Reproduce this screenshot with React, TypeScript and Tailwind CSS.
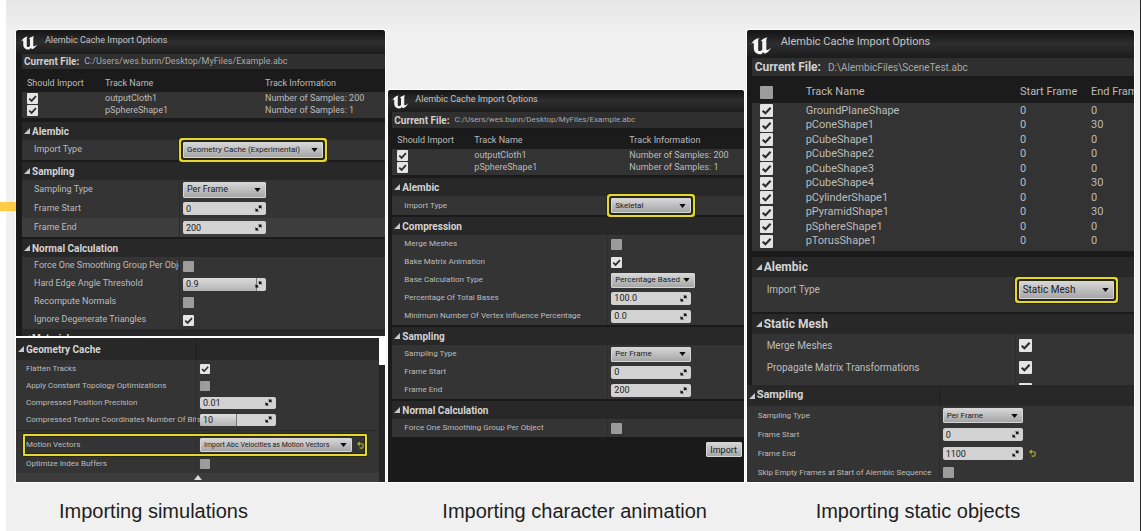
import React from "react";

type Box = { className?: string };

function UnrealLogo({ className = "" }: Box) {
  return (
    <svg viewBox="0 0 32 28" className={className} aria-hidden="true" fill="#f4f4f4">
      <path d="M0 11C3 5.500 7 2 13.500 1C11.800 2.500 11.500 4 11.500 6V19C11.500 21 12.300 22 13.800 22C15.500 22 17 21 18 20V7C18 6 17 5.500 15.500 6C17.500 3.500 21.500 1 26.500 0.500C24.800 2 24.500 3.500 24.500 5V18.500C24.500 20 25 20.500 26 20.500C28 20.500 30 19 32 16.500C30.500 21.500 27 24.500 22 26.500L19.500 24L16.500 27C10 28 4.800 24.500 4.500 18V10.500C4.500 8.500 2.500 8.500 0 11Z" />
    </svg>
  );
}

function Check({ label, checked = false, size = "size-[11px]" }: { label: string; checked?: boolean; size?: string }) {
  return (
    <span className={`grid shrink-0 ${size}`}>
      <input
        type="checkbox"
        aria-label={label}
        defaultChecked={checked}
        className="peer col-start-1 row-start-1 size-full appearance-none rounded-[1px] bg-[#9c9c9c] checked:bg-[#e4e4e4]"
      />
      <svg viewBox="0 0 12 12" className="pointer-events-none invisible col-start-1 row-start-1 size-full peer-checked:visible" fill="none" stroke="#2c2c2c" strokeWidth="1.900" aria-hidden="true">
        <path d="M2.500 6.200L5 8.600L9.800 3.400" />
      </svg>
    </span>
  );
}

function Select({ label, value, className, marked = false }: { label: string; value: string; className: string; marked?: boolean }) {
  return (
    <span className={`grid shrink-0 items-center ${marked ? "rounded-[1px] shadow-[0_0_0_2px_#29270f,0_0_0_4px_#e2d831,0_0_0_5px_#29270f] relative" : ""} ${className}`}>
      <select
        aria-label={label}
        defaultValue={value}
        className="col-start-1 row-start-1 size-full appearance-none rounded-[1px] border border-[#d6d6d6] bg-linear-to-b from-[#d6d6d6] to-[#a6a6a6] pl-[3px] text-[#1c1c1c]"
      >
        <option>{value}</option>
      </select>
      <svg viewBox="0 0 8 5" className="pointer-events-none col-start-1 row-start-1 mr-[5px] h-[4px] w-[7px] justify-self-end" fill="#0c0c0c" aria-hidden="true">
        <path d="M0 0H8L4 5Z" />
      </svg>
    </span>
  );
}

function NumberBox({ label, value, className, fill = "" }: { label: string; value: string; className: string; fill?: string }) {
  return (
    <span className={`grid shrink-0 items-center overflow-hidden rounded-[2px] bg-[#d2d2d2] text-[9px] ${className}`}>
      <span className={`col-start-1 row-start-1 h-full bg-linear-to-b from-[#dcdcdc] to-[#b4b4b4] ${fill || "hidden"}`} />
      <input
        type="text"
        aria-label={label}
        defaultValue={value}
        className="col-start-1 row-start-1 size-full min-w-0 bg-transparent pl-[3px] text-[#1c1c1c]"
      />
      <svg viewBox="0 0 8 8" className="pointer-events-none col-start-1 row-start-1 mr-[4px] size-[7px] justify-self-end" fill="#101010" aria-hidden="true">
        <path d="M3.500 0.500H7.500V4.500L6.200 3.200L5.300 4.100L3.900 2.700L4.800 1.800ZM4.500 7.500H0.500V3.500L1.800 4.800L2.400 4.200L3.800 5.600L3.200 6.200Z" />
      </svg>
    </span>
  );
}

function Reset() {
  return (
    <button type="button" aria-label="Reset to default" className="shrink-0">
      <svg viewBox="0 0 8 8" className="size-[7px]" fill="none" stroke="#b4b42c" strokeWidth="1.300" aria-hidden="true">
        <path d="M1.500 2H5.500Q7 2 7 4V5Q7 7 5.500 7H3" />
        <path d="M3.200 0L1 2L3.200 4" />
      </svg>
    </button>
  );
}

function Header({ title, className }: { title: string; className: string }) {
  return (
    <h3 className={`flex items-center gap-[2px] overflow-hidden bg-[#282828] font-bold whitespace-nowrap text-[#d4d4d4] ${className}`}>
      <svg viewBox="0 0 6 6" className="size-[6px] shrink-0" fill="#c8c8c8" aria-hidden="true">
        <path d="M6 0V6H0Z" />
      </svg>
      {title}
    </h3>
  );
}

function Row({ label, className, clip = false, children }: { label: string; className: string; clip?: boolean; children: React.ReactNode }) {
  return (
    <div className={`grid ${className}`}>
      <span className={`flex min-w-0 items-center whitespace-nowrap ${clip ? "overflow-hidden" : ""}`}>{label}</span>
      <div className="flex items-center border-l border-[#2b2b2b] pl-[3px]">{children}</div>
    </div>
  );
}

function TitleBar({ className, logo }: { className: string; logo: string }) {
  return (
    <div className={`flex items-start overflow-hidden bg-linear-to-b from-[#141414] via-[#2e2e2e] to-[#1c1c1c] whitespace-nowrap text-[#c4c4c4] ${className}`}>
      <UnrealLogo className={logo} />
      <h2>Alembic Cache Import Options</h2>
    </div>
  );
}

function FilePath({ path, className, pathClass }: { path: string; className: string; pathClass: string }) {
  return (
    <p className={`flex items-center overflow-hidden bg-[#2f2f2f] whitespace-nowrap ${className}`}>
      <b className="text-[#d0d0d0]">Current File:</b>
      <span className={`text-[#a8a8a8] ${pathClass}`}>{path}</span>
    </p>
  );
}

function TrackTable({ className, cols, head }: { className: string; cols: string[]; head: string }) {
  const rows = [
    ["outputCloth1", "Number of Samples: 200"],
    ["pSphereShape1", "Number of Samples: 1"],
  ];
  return (
    <table className={`w-full table-fixed text-left text-[9px] leading-[12px] whitespace-nowrap ${className}`}>
      <colgroup>
        {cols.map((c, i) => (
          <col key={i} className={c} />
        ))}
        <col />
      </colgroup>
      <thead className="bg-[#1b1b1b]">
        <tr className={head}>
          <th className="p-0 pl-[5px] font-normal">Should Import</th>
          <th className="p-0 font-normal">Track Name</th>
          <th className="p-0 font-normal">Track Information</th>
        </tr>
      </thead>
      <tbody className="bg-[#333333]">
        {rows.map(([name, info]) => (
          <tr key={name} className="h-[12px]">
            <td className="p-0 pl-[5px]"><Check label={name} checked /></td>
            <td className="p-0">{name}</td>
            <td className="p-0">{info}</td>
          </tr>
        ))}
      </tbody>
    </table>
  );
}

const panel = "overflow-hidden rounded-t-[3px] bg-[#1a1a1a] text-[#bcbcbc] ring-1 ring-white";
const caption = "pt-[17px] text-[20px] leading-6 whitespace-nowrap text-[#1e1e22] font-['Liberation_Sans',sans-serif]";

function Simulations() {
  const row = "h-[18px] grid-cols-[145px_1fr] pl-[12px] bg-[#343434]";
  const tall = "h-[19px] grid-cols-[145px_1fr] pl-[12px] bg-[#343434]";
  const low = "h-[17px] grid-cols-[170px_1fr] pl-[10px]";
  const head = "mt-[2px] h-[18px] pl-[2px] text-[10px]";
  return (
    <figure>
      <div className={`${panel} text-[9px]`}>
        <TitleBar className="h-[24px] pt-[4px] pl-[5px] text-[9px] leading-[13px]" logo="mt-[2px] mr-[8px] h-[14px] w-[16px]" />
        <div className="pl-[6px]">
          <FilePath path="C:/Users/wes.bunn/Desktop/MyFiles/Example.abc" className="h-[15px] pl-[2px] text-[10px]" pathClass="ml-[5px] text-[9px]" />
          <TrackTable className="mt-[4px] mb-[4px] border-b-2 border-[#333333]" cols={["w-[83px]", "w-[160px]"]} head="h-[19px]" />
          <Header title="Alembic" className="h-[18px] pl-[2px] text-[10px]" />
          <Row label="Import Type" className="h-[20px] grid-cols-[145px_1fr] bg-[#343434] pl-[12px]">
            <Select label="Import Type" value="Geometry Cache (Experimental)" className="h-[16px] w-[140px] text-[8px]" marked />
          </Row>
          <Header title="Sampling" className={head} />
          <Row label="Sampling Type" className={tall}>
            <Select label="Sampling Type" value="Per Frame" className="h-[15px] w-[83px]" />
          </Row>
          <Row label="Frame Start" className={tall}>
            <NumberBox label="Frame Start" value="0" className="h-[13px] w-[83px]" />
          </Row>
          <Row label="Frame End" className="h-[19px] grid-cols-[145px_1fr] bg-[#3d3d3d] pl-[12px]">
            <NumberBox label="Frame End" value="200" className="h-[13px] w-[83px]" />
          </Row>
          <Header title="Normal Calculation" className={head} />
          <Row label="Force One Smoothing Group Per Object" className={row} clip><Check label="Force One Smoothing Group Per Object" /></Row>
          <Row label="Hard Edge Angle Threshold" className={row}>
            <NumberBox label="Hard Edge Angle Threshold" value="0.9" className="h-[13px] w-[83px]" fill="w-[74px] border-r border-[#777777]" />
          </Row>
          <Row label="Recompute Normals" className={row}><Check label="Recompute Normals" /></Row>
          <Row label="Ignore Degenerate Triangles" className={row}><Check label="Ignore Degenerate Triangles" checked /></Row>
          <div className="h-[7px] overflow-hidden">
            <Header title="Material" className="h-[18px] pl-[2px] text-[10px]" />
          </div>
        </div>
        <div className="flex border-t-2 border-white text-[8px]">
          <div className="min-w-0 flex-1 bg-[#343434]">
            <div className="grid grid-cols-[180px_1fr] bg-[#282828]">
              <Header title="Geometry Cache" className="h-[22px] pl-[2px] text-[10px]" />
              <div className="border-l border-[#1f1f1f]" />
            </div>
            <Row label="Flatten Tracks" className={low}><Check label="Flatten Tracks" checked size="size-[10px]" /></Row>
            <Row label="Apply Constant Topology Optimizations" className={low}><Check label="Apply Constant Topology Optimizations" size="size-[10px]" /></Row>
            <Row label="Compressed Position Precision" className={low}>
              <NumberBox label="Compressed Position Precision" value="0.01" className="h-[12px] w-[76px]" />
            </Row>
            <Row label="Compressed Texture Coordinates Number Of Bits" className={low}>
              <NumberBox label="Compressed Texture Coordinates Number Of Bits" value="10" className="h-[12px] w-[76px]" fill="w-[37px] border-r border-[#777777]" />
            </Row>
            <div className="mt-[2px] border-t border-[#292929]" />
            <div className="relative mt-[3px] mr-[12px] ml-[7px] rounded-[1px] border-2 border-[#e2d831] shadow-[0_0_0_1px_#29270f,inset_0_0_0_1px_#29270f]">
              <Row label="Motion Vectors" className="h-[18px] grid-cols-[170px_1fr] pl-[1px]">
                <Select label="Motion Vectors" value="Import Abc Velocities as Motion Vectors" className="mr-[5px] h-[14px] w-[152px] text-[7px]" />
                <Reset />
              </Row>
            </div>
            <Row label="Optimize Index Buffers" className="h-[15px] grid-cols-[170px_1fr] pl-[10px]"><Check label="Optimize Index Buffers" size="size-[10px]" /></Row>
            <div className="mt-[2px] grid h-[9px] place-items-center bg-[#3c3c3c]">
              <svg viewBox="0 0 8 5" className="h-[5px] w-[8px]" fill="#dcdcdc" aria-hidden="true"><path d="M4 0L8 5H0Z" /></svg>
            </div>
          </div>
          <div className="w-[6px] bg-[#262626]"><div className="h-[27px] bg-white" /></div>
        </div>
      </div>
      <figcaption className={`${caption} pl-[43px]`}>Importing simulations</figcaption>
    </figure>
  );
}

function CharacterAnimation() {
  const row = "h-[18px] grid-cols-[203px_1fr] pl-[12px] bg-[#343434]";
  const head = "mt-[2px] h-[18px] pl-[2px] text-[10px]";
  return (
    <figure>
      <div className={`${panel} text-[8px]`}>
        <TitleBar className="h-[22px] pt-[3px] pl-[4px] text-[9px] leading-[13px]" logo="mt-[2px] mr-[7px] h-[14px] w-[16px]" />
        <div className="pl-[4px]">
          <FilePath path="C:/Users/wes.bunn/Desktop/MyFiles/Example.abc" className="h-[16px] pl-[2px] text-[10px]" pathClass="ml-[5px] text-[8px]" />
          <TrackTable className="mt-[3px] mb-[3px] border-b-2 border-[#333333]" cols={["w-[82px]", "w-[155px]"]} head="h-[18px]" />
          <Header title="Alembic" className="h-[18px] pl-[2px] text-[10px]" />
          <Row label="Import Type" className="h-[19px] grid-cols-[203px_1fr] bg-[#343434] pl-[12px]">
            <Select label="Import Type" value="Skeletal" className="h-[15px] w-[80px]" marked />
          </Row>
          <Header title="Compression" className={head} />
          <Row label="Merge Meshes" className={row}><Check label="Merge Meshes" /></Row>
          <Row label="Bake Matrix Animation" className={row}><Check label="Bake Matrix Animation" checked /></Row>
          <Row label="Base Calculation Type" className={row}>
            <Select label="Base Calculation Type" value="Percentage Based" className="h-[15px] w-[84px]" />
          </Row>
          <Row label="Percentage Of Total Bases" className={row}>
            <NumberBox label="Percentage Of Total Bases" value="100.0" className="h-[13px] w-[80px]" />
          </Row>
          <Row label="Minimum Number Of Vertex Influence Percentage" className={row}>
            <NumberBox label="Minimum Number Of Vertex Influence Percentage" value="0.0" className="h-[13px] w-[80px]" />
          </Row>
          <Header title="Sampling" className={head} />
          <Row label="Sampling Type" className={row}>
            <Select label="Sampling Type" value="Per Frame" className="h-[15px] w-[80px]" />
          </Row>
          <Row label="Frame Start" className={row}>
            <NumberBox label="Frame Start" value="0" className="h-[13px] w-[80px]" />
          </Row>
          <Row label="Frame End" className={row}>
            <NumberBox label="Frame End" value="200" className="h-[13px] w-[80px]" />
          </Row>
          <Header title="Normal Calculation" className={head} />
          <Row label="Force One Smoothing Group Per Object" className={row}><Check label="Force One Smoothing Group Per Object" /></Row>
          <div className="flex h-[45px] items-start justify-end pt-[5px] pr-[2px]">
            <button type="button" className="h-[15px] w-[36px] rounded-[1px] border border-[#d6d6d6] bg-linear-to-b from-[#d6d6d6] to-[#a6a6a6] text-[9px] leading-[12px] text-[#1c1c1c]">Import</button>
          </div>
        </div>
      </div>
      <figcaption className={`${caption} pl-[54px]`}>Importing character animation</figcaption>
    </figure>
  );
}

function StaticObjects() {
  const tracks = [
    ["GroundPlaneShape", 0],
    ["pConeShape1", 30],
    ["pCubeShape1", 0],
    ["pCubeShape2", 0],
    ["pCubeShape3", 0],
    ["pCubeShape4", 30],
    ["pCylinderShape1", 0],
    ["pPyramidShape1", 30],
    ["pSphereShape1", 0],
    ["pTorusShape1", 0],
  ] as const;
  const row = "h-[22px] grid-cols-[248px_1fr] pl-[15px] text-[10px] bg-[#343434]";
  const low = "h-[19px] grid-cols-[181px_1fr] pl-[11px]";
  return (
    <figure>
      <div className={`${panel} text-[8px]`}>
        <TitleBar className="h-[28px] pt-[5px] pl-[4px] text-[11px] leading-[14px]" logo="mt-[2px] mr-[10px] h-[18px] w-[20px]" />
        <div className="pl-[5px]">
          <FilePath path="D:\AlembicFiles\SceneTest.abc" className="h-[18px] pl-[3px] text-[12px]" pathClass="ml-[7px] text-[10px]" />
          <div className="mt-[5px] mb-[6px] bg-[#333333] pb-[3px]">
            <table className="w-full table-fixed text-left text-[11px] leading-[14px] whitespace-nowrap">
              <colgroup>
                <col className="w-[54px]" />
                <col />
                <col className="w-[71px]" />
                <col className="w-[43px]" />
              </colgroup>
              <thead className="bg-[#1b1b1b]">
                <tr className="h-[22px]">
                  <th className="p-0 pl-[8px]"><Check label="Import all tracks" size="size-[13px]" /></th>
                  <th className="p-0 font-normal">Track Name</th>
                  <th className="p-0 font-normal">Start Frame</th>
                  <th className="overflow-hidden p-0 font-normal">End Frame</th>
                </tr>
              </thead>
              <tbody>
                {tracks.map(([name, end]) => (
                  <tr key={name} className="odd:h-[15px] even:h-[14px]">
                    <td className="p-0 pl-[8px]"><Check label={name} checked size="size-[13px]" /></td>
                    <td className="p-0">{name}</td>
                    <td className="p-0">0</td>
                    <td className="p-0">{end}</td>
                  </tr>
                ))}
              </tbody>
            </table>
          </div>
          <Header title="Alembic" className="h-[20px] pl-[4px] text-[12px]" />
          <div className="bg-[#343434] pb-[10px]">
            <Row label="Import Type" className="h-[25px] grid-cols-[248px_1fr] pl-[15px] text-[10px]">
              <Select label="Import Type" value="Static Mesh" className="h-[18px] w-[95px]" marked />
            </Row>
          </div>
          <Header title="Static Mesh" className="mt-[2px] h-[20px] pl-[4px] text-[12px]" />
          <Row label="Merge Meshes" className={row}><Check label="Merge Meshes" checked size="size-[13px]" /></Row>
          <Row label="Propagate Matrix Transformations" className={row}><Check label="Propagate Matrix Transformations" checked size="size-[13px]" /></Row>
          <div className="h-[7px] overflow-hidden bg-[#343434]">
            <Row label="" className={row}><Check label="Additional option" checked size="size-[13px]" /></Row>
          </div>
        </div>
        <div className="bg-[#343434]">
          <div className="grid grid-cols-[192px_1fr] bg-[#282828]">
            <Header title="Sampling" className="h-[21px] pl-[2px] text-[11px]" />
            <div className="border-l border-[#1f1f1f]" />
          </div>
          <Row label="Sampling Type" className={low}>
            <Select label="Sampling Type" value="Per Frame" className="h-[15px] w-[80px]" />
          </Row>
          <Row label="Frame Start" className={low}>
            <NumberBox label="Frame Start" value="0" className="h-[13px] w-[80px]" />
          </Row>
          <Row label="Frame End" className={low}>
            <NumberBox label="Frame End" value="1100" className="mr-[6px] h-[13px] w-[80px]" />
            <Reset />
          </Row>
          <Row label="Skip Empty Frames at Start of Alembic Sequence" className={low}><Check label="Skip Empty Frames at Start of Alembic Sequence" /></Row>
        </div>
      </div>
      <figcaption className={`${caption} pl-[69px]`}>Importing static objects</figcaption>
    </figure>
  );
}

export default function App() {
  return (
    <main className="relative min-h-screen border-r border-[#2a2a2a] bg-[#f0f0f0] font-[Roboto,sans-serif]">
      <div className="ml-[6px] grid grid-cols-[369fr_355fr_387fr] items-end gap-x-[3px] bg-linear-to-b from-[#e6e6e6] to-[#f0f0f0] to-[30px] pt-[30px] pr-[6px] pl-[10px]">
        <Simulations />
        <CharacterAnimation />
        <StaticObjects />
      </div>
      <div className="absolute inset-y-0 left-0 w-[6px] bg-white" />
      <div className="absolute top-[202px] left-0 h-[9px] w-[16px] bg-[#fdcb48]" />
    </main>
  );
}
